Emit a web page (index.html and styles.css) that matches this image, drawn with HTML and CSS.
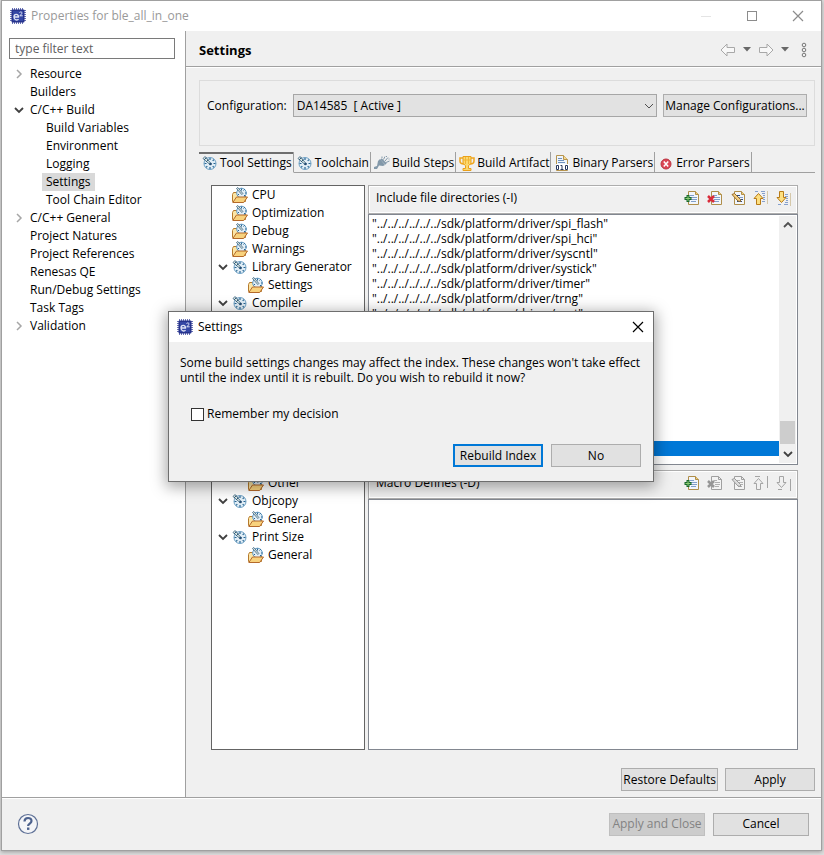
FILE: index.html
```html
<!DOCTYPE html>
<html lang="en">
<head>
<meta charset="utf-8">
<title>Properties for ble_all_in_one</title>
<link rel="stylesheet" href="styles.css">
</head>
<body>
<svg class="sprite" aria-hidden="true">
  <defs>
    <symbol id="chip" viewBox="0 0 16 16">
      <path d="M2.500 0v16M4.500 0v16M6.500 0v16M8.500 0v16M10.500 0v16M12.500 0v16M0 2.500h16M0 4.500h16M0 6.500h16M0 8.500h16M0 10.500h16M0 12.500h16" stroke="#6a72b4" stroke-width="1"/>
      <rect x="1.500" y="1.500" width="13" height="13" rx="1" fill="#26338c"/>
      <rect x="3" y="3" width="10" height="10" fill="#3446a4"/>
      <path d="M4 9h4.500C8.500 5.500 4 5.600 4 9s3.500 3.600 4.500 2" fill="none" stroke="#dfe3f5" stroke-width="1.300"/>
      <path d="M9.500 4.500c1-1 3-.5 2.500 1L9.700 7.800h3" fill="none" stroke="#dfe3f5"/>
    </symbol>
    <symbol id="gauge" viewBox="0 0 16 16">
      <circle cx="8" cy="8.500" r="6" fill="#e2eef6" stroke="#6b9fc4"/>
      <path d="M8 3v2M8 12v2M2.500 8.500h2M11.500 8.500h2M4.100 12.400l1.200-1.200M10.700 11.200l1.200 1.200M10.700 5.800l1.200-1.200" stroke="#286694" stroke-width="1.200"/>
      <path d="M1 3.500l2-2 6 7-1 1z" fill="#dfe8e2" stroke="#315d7c" stroke-width=".8"/>
      <path d="M2 5l2.500-2.500M4 7l2.500-2.500" stroke="#315d7c"/>
      <circle cx="8.500" cy="9" r="1.300" fill="#244d73"/>
    </symbol>
    <symbol id="folder" viewBox="0 0 16 16">
      <path d="M.5 14.500v-7l1-2h4l1 2h7v7z" fill="#fbe5a6" stroke="#b57a2c"/>
      <circle cx="9.500" cy="6" r="4.800" fill="#e2eef6" stroke="#5f98c2"/>
      <path d="M9.500 1.500v2M13 6h1.500M11.500 3.500l1.300-1.300M12 8l1 1M6 8l1-1" stroke="#286694"/>
      <path d="M4.500 1.500l1.300-1 5 6-1 1z" fill="#e7ece4" stroke="#315d7c" stroke-width=".8"/>
      <path d="M.8 15.500l3.700-5.500h11l-3.800 5.500z" fill="#f8d27d" stroke="#b4692a"/>
    </symbol>
    <symbol id="steps" viewBox="0 0 16 16">
      <path d="M0 14v-2l3-1 1-5 2-2 5 6-2 1-4-.5-2 3.500z" fill="#8298a9"/>
      <path d="M7 4l5 5" stroke="#8298a9" stroke-width="2"/>
      <path d="M9.500 4.500l1.500-3M11 6l3-3.500M12 7.500l3.500-1.500M8 3l0-1.500M12.500 1v1M15 3.500v1" stroke="#8298a9"/>
    </symbol>
    <symbol id="trophy" viewBox="0 0 16 16">
      <path d="M4 3H1v3c0 3 2 3 4 3M12 3h3v3c0 3-2 3-4 3" fill="none" stroke="#efa51d" stroke-width="1.500"/>
      <path d="M4 1.500h8v7l-2.500 2v3H12v2H4v-2h2.500v-3L4 8.500z" fill="#fbd86e" stroke="#eaa01a"/>
      <path d="M6.500 2v7M9.500 2v7M4 5h8" stroke="#f2b535"/>
    </symbol>
    <symbol id="binary" viewBox="0 0 16 16">
      <path d="M2.500 15.500V.5h7l4 4v11z" fill="#eef4fb" stroke="#b7954f"/>
      <path d="M9.500.5v4h4" fill="#f8d98e" stroke="#b7954f"/>
      <path d="M4 3.500h4M4 5.500h6M4 7.500h7" stroke="#6d90be"/>
      <path d="M2 9h13v6H2z" fill="#fff"/>
      <path d="M2.500 10.500h2v4h-2zM6.500 10.500h1.500V14.500M6.500 14.500h3M11.500 10.500h2v4h-2z" fill="none" stroke="#26365d"/>
    </symbol>
    <symbol id="error" viewBox="0 0 16 16">
      <circle cx="8" cy="9" r="5" fill="#db4654" stroke="#bb3442"/>
      <path d="M5.800 6.500l4.400 5M10.200 6.500l-4.400 5" stroke="#fff" stroke-width="1.500"/>
    </symbol>
    <symbol id="page" viewBox="0 0 16 16">
      <path d="M4.500 14.500V1.500h7l3 3v10z" fill="#f2f6fc" stroke="#af8e4a"/>
      <path d="M11.500 1.500v3h3" fill="#f3cf7a" stroke="#af8e4a"/>
      <path d="M6 5.500h4M7 7.500h6M7 9.500h6M7 11.500h5" stroke="#829fc9"/>
    </symbol>
    <symbol id="add" viewBox="0 0 16 16">
      <use href="#page"/><path d="M4 5v7M.5 8.500h7" stroke="#17672a" stroke-width="3"/><path d="M4 6v5M1.500 8.500h5" stroke="#8fcd75"/>
    </symbol>
    <symbol id="remove" viewBox="0 0 16 16">
      <use href="#page"/><path d="M1 6l6 6M7 6l-6 6" stroke="#d92c3b" stroke-width="2.500"/>
    </symbol>
    <symbol id="edit" viewBox="0 0 16 16">
      <use href="#page"/><path d="M7 9.500h6M7 11.500h5M6 5.500h4" stroke="#334d7b"/><path d="M2 4.500l2.500-1 6 6v2l-2.500-.5z" fill="#f3cf83" stroke="#946a29"/>
    </symbol>
    <symbol id="up" viewBox="0 0 16 16">
      <path d="M2 1.500h3M8 1.500h4M9 3.500h3M10 5.500h2M10 7.500h2M10 9.500h2M9 11.500h3" stroke="#86a0cc"/><path d="M14.500 1v13" stroke="#d5c8aa"/>
      <path d="M5.500 3.500l4.500 5H7.500v6h-4v-6H1z" fill="#fddf80" stroke="#b77a16"/>
    </symbol>
    <symbol id="down" viewBox="0 0 16 16">
      <path d="M2 14.500h3M8 14.500h4M9 12.500h3M10 10.500h2M10 8.500h2M9 6.500h3M9 4.500h3" stroke="#86a0cc"/><path d="M14.500 3v13" stroke="#d5c8aa"/>
      <path d="M5.500 12.500L1 7.500h2.500v-6h4v6H10z" fill="#fddf80" stroke="#b77a16"/>
    </symbol>
    <symbol id="page-off" viewBox="0 0 16 16">
      <path d="M4.500 14.500V1.500h7l3 3v10zM11.500 1.500v3h3" fill="#f3f3f3" stroke="#a0a0a0"/><path d="M7 5.500h3M8 7.500h5M8 9.500h5M8 11.500h4" stroke="#b0b0b0"/>
    </symbol>
    <symbol id="remove-off" viewBox="0 0 16 16"><use href="#page-off"/><path d="M1 6l6 6M7 6l-6 6" stroke="#969696" stroke-width="2.500"/></symbol>
    <symbol id="edit-off" viewBox="0 0 16 16"><use href="#page-off"/><path d="M2 4.500l2.500-1 6 6v2l-2.500-.5z" fill="#ddd" stroke="#999"/></symbol>
    <symbol id="up-off" viewBox="0 0 16 16"><path d="M5.500 3.500l4.500 5H7.500v6h-4v-6H1zM2 1.500h5M14.500 1v12" fill="none" stroke="#a4a4a4"/></symbol>
    <symbol id="down-off" viewBox="0 0 16 16"><path d="M5.500 12.500L1 7.500h2.500v-6h4v6H10zM2 14.500h4M14.500 4v12" fill="none" stroke="#a4a4a4"/></symbol>
    <symbol id="open" viewBox="0 0 10 10"><path d="M1 3l4 4 4-4" fill="none" stroke="#404040" stroke-width="1.800"/></symbol>
    <symbol id="closed" viewBox="0 0 10 10"><path d="M3 1l4 4-4 4" fill="none" stroke="#a6a6a6" stroke-width="1.500"/></symbol>
    <symbol id="close" viewBox="0 0 12 12"><path d="M1 1l10 10M11 1L1 11" stroke="currentColor" stroke-width="1.200"/></symbol>
    <symbol id="left" viewBox="0 0 16 14"><path d="M1 7l6-6v3.500h7.500v5H7V13z" fill="#f8f8f8" stroke="#a8a8a8"/></symbol>
    <symbol id="right" viewBox="0 0 16 14"><path d="M15 7L9 1v3.500H1.500v5H9V13z" fill="#f8f8f8" stroke="#a8a8a8"/></symbol>
    <symbol id="caret" viewBox="0 0 8 5"><path d="M0 0h8L4 4.500z" fill="#686868"/></symbol>
  </defs>
</svg>

<main class="window">
  <header class="titlebar">
    <svg class="i16"><use href="#chip"/></svg>
    <span class="title">Properties for ble_all_in_one</span>
    <div class="caption">
      <button aria-label="Minimize"><svg class="i12"><path d="M1 6.500h10" stroke="#e4e4e4"/></svg></button>
      <button aria-label="Maximize"><svg class="i12"><rect x="1.500" y="1.500" width="9" height="9" fill="none" stroke="#8c8c8c"/></svg></button>
      <button aria-label="Close"><svg class="i12"><use href="#close"/></svg></button>
    </div>
  </header>

  <div class="body">
    <nav class="side">
      <input class="filter" type="text" aria-label="Filter" placeholder="type filter text">
      <ul class="nav">
        <li><svg class="i10"><use href="#closed"/></svg><a href="#">Resource</a></li>
        <li><i class="i10"></i><a href="#">Builders</a></li>
        <li><svg class="i10"><use href="#open"/></svg><a href="#">C/C++ Build</a></li>
        <li class="sub"><a href="#">Build Variables</a></li>
        <li class="sub"><a href="#">Environment</a></li>
        <li class="sub"><a href="#">Logging</a></li>
        <li class="sub"><a href="#" class="current">Settings</a></li>
        <li class="sub"><a href="#">Tool Chain Editor</a></li>
        <li><svg class="i10"><use href="#closed"/></svg><a href="#">C/C++ General</a></li>
        <li><i class="i10"></i><a href="#">Project Natures</a></li>
        <li><i class="i10"></i><a href="#">Project References</a></li>
        <li><i class="i10"></i><a href="#">Renesas QE</a></li>
        <li><i class="i10"></i><a href="#">Run/Debug Settings</a></li>
        <li><i class="i10"></i><a href="#">Task Tags</a></li>
        <li><svg class="i10"><use href="#closed"/></svg><a href="#">Validation</a></li>
      </ul>
    </nav>

    <section class="page">
      <header class="heading">
        <h1>Settings</h1>
        <div class="history">
          <button aria-label="Back"><svg class="arrow"><use href="#left"/></svg></button>
          <button aria-label="Back history"><svg class="caret"><use href="#caret"/></svg></button>
          <button aria-label="Forward"><svg class="arrow"><use href="#right"/></svg></button>
          <button aria-label="Forward history"><svg class="caret"><use href="#caret"/></svg></button>
          <button class="menu" aria-label="Menu"><svg class="dots"><g fill="none" stroke="#777"><circle cx="4" cy="3" r="1.800"/><circle cx="4" cy="8" r="1.800"/><circle cx="4" cy="13" r="1.800"/></g></svg></button>
        </div>
      </header>

      <div class="content">
        <div class="config">
          <label for="cfg">Configuration:</label>
          <div class="combo">
            <select id="cfg"><option>DA14585&nbsp; [ Active ]</option></select>
            <svg class="i10"><path d="M1 3l4 4 4-4" fill="none" stroke="#505050"/></svg>
          </div>
          <button class="btn manage">Manage Configurations...</button>
        </div>

        <div class="tabs" role="tablist">
          <button role="tab" class="tab active" aria-selected="true"><svg class="i16"><use href="#gauge"/></svg>Tool Settings</button>
          <button role="tab" class="tab"><svg class="i16"><use href="#gauge"/></svg>Toolchain</button>
          <button role="tab" class="tab"><svg class="i16"><use href="#steps"/></svg>Build Steps</button>
          <button role="tab" class="tab"><svg class="i16"><use href="#trophy"/></svg>Build Artifact</button>
          <button role="tab" class="tab"><svg class="i16"><use href="#binary"/></svg>Binary Parsers</button>
          <button role="tab" class="tab"><svg class="i16"><use href="#error"/></svg>Error Parsers</button>
          <div class="rest"></div>
        </div>

        <div class="panels">
          <ul class="tools">
            <li><i class="i10"></i><svg class="i16"><use href="#folder"/></svg>CPU</li>
            <li><i class="i10"></i><svg class="i16"><use href="#folder"/></svg>Optimization</li>
            <li><i class="i10"></i><svg class="i16"><use href="#folder"/></svg>Debug</li>
            <li><i class="i10"></i><svg class="i16"><use href="#folder"/></svg>Warnings</li>
            <li><svg class="i10"><use href="#open"/></svg><svg class="i16"><use href="#gauge"/></svg>Library Generator</li>
            <li class="leaf"><svg class="i16"><use href="#folder"/></svg>Settings</li>
            <li><svg class="i10"><use href="#open"/></svg><svg class="i16"><use href="#gauge"/></svg>Compiler</li>
            <li class="leaf after-gap"><svg class="i16"><use href="#folder"/></svg>Other</li>
            <li><svg class="i10"><use href="#open"/></svg><svg class="i16"><use href="#gauge"/></svg>Objcopy</li>
            <li class="leaf"><svg class="i16"><use href="#folder"/></svg>General</li>
            <li><svg class="i10"><use href="#open"/></svg><svg class="i16"><use href="#gauge"/></svg>Print Size</li>
            <li class="leaf"><svg class="i16"><use href="#folder"/></svg>General</li>
          </ul>

          <div class="options">
            <section class="option">
              <header class="bar">
                <h2>Include file directories (-I)</h2>
                <button aria-label="Add"><svg class="i16"><use href="#add"/></svg></button>
                <button aria-label="Delete"><svg class="i16"><use href="#remove"/></svg></button>
                <button aria-label="Edit"><svg class="i16"><use href="#edit"/></svg></button>
                <button aria-label="Move up"><svg class="i16"><use href="#up"/></svg></button>
                <button aria-label="Move down"><svg class="i16"><use href="#down"/></svg></button>
              </header>
              <div class="list">
                <ul class="paths">
                  <li>"../../../../../../sdk/platform/driver/spi_flash"</li>
                  <li>"../../../../../../sdk/platform/driver/spi_hci"</li>
                  <li>"../../../../../../sdk/platform/driver/syscntl"</li>
                  <li>"../../../../../../sdk/platform/driver/systick"</li>
                  <li>"../../../../../../sdk/platform/driver/timer"</li>
                  <li>"../../../../../../sdk/platform/driver/trng"</li>
                  <li>"../../../../../../sdk/platform/driver/uart"</li>
                  <li class="selected"></li>
                </ul>
                <div class="scroll">
                  <svg class="i10"><path d="M1 7l4-4 4 4" fill="none" stroke="#505050" stroke-width="1.800"/></svg>
                  <div class="thumb"></div>
                  <svg class="i10"><use href="#open"/></svg>
                </div>
              </div>
            </section>
            <section class="option">
              <header class="bar">
                <h2>Macro Defines (-D)</h2>
                <button aria-label="Add"><svg class="i16"><use href="#add"/></svg></button>
                <button aria-label="Delete" disabled><svg class="i16"><use href="#remove-off"/></svg></button>
                <button aria-label="Edit" disabled><svg class="i16"><use href="#edit-off"/></svg></button>
                <button aria-label="Move up" disabled><svg class="i16"><use href="#up-off"/></svg></button>
                <button aria-label="Move down" disabled><svg class="i16"><use href="#down-off"/></svg></button>
              </header>
              <div class="list"></div>
            </section>
          </div>
        </div>

        <div class="actions">
          <button class="btn restore">Restore Defaults</button>
          <button class="btn">Apply</button>
        </div>
      </div>
    </section>
  </div>

  <footer class="footer">
    <button class="help" aria-label="Help"><svg class="i22"><circle cx="11" cy="11" r="9.500" fill="#f4f5f8" stroke="#5e7096" stroke-width="1.200"/><path d="M7.500 8.500C7.500 3.800 14.500 4 14.500 8c0 2.500-3.400 2.600-3.400 5" fill="none" stroke="#4d628e" stroke-width="2.200"/><rect x="10" y="14.500" width="2.400" height="2.400" fill="#4d628e"/></svg></button>
    <button class="btn wide" disabled>Apply and Close</button>
    <button class="btn wide">Cancel</button>
  </footer>
</main>

<div class="dialog" role="dialog" aria-labelledby="dlg-title">
  <header class="dialog-title">
    <svg class="i16"><use href="#chip"/></svg>
    <span id="dlg-title">Settings</span>
    <button aria-label="Close"><svg class="i12"><use href="#close"/></svg></button>
  </header>
  <p>Some build settings changes may affect the index. These changes won't take effect<br>until the index until it is rebuilt. Do you wish to rebuild it now?</p>
  <label class="check"><input type="checkbox">Remember my decision</label>
  <div class="dialog-actions">
    <button class="btn primary">Rebuild Index</button>
    <button class="btn">No</button>
  </div>
</div>
</body>
</html>
```
FILE: styles.css
```css
* { box-sizing: border-box; }

body {
  margin: 0;
  padding: 0 2px 4px 1px;
  min-height: 100vh;
  display: flex;
  position: relative;
  background: #dedede;
  color: #000;
  font: 12px/18px "Open Sans", "Noto Sans", sans-serif;
}

ul, h1, h2, p { margin: 0; padding: 0; list-style: none; font-size: 12px; }
h2 { font-weight: 400; }
a { color: inherit; text-decoration: none; }
button, input, select { font: inherit; color: inherit; }
button { border: 0; padding: 0; background: none; white-space: nowrap; }
svg { display: block; flex: none; }

.sprite { position: absolute; width: 0; height: 0; }
.i10 { width: 10px; height: 10px; flex: none; }
.i12 { width: 12px; height: 12px; }
.i16 { width: 16px; height: 16px; }
.i22 { width: 22px; height: 22px; }

.window {
  flex: 1;
  min-width: 0;
  display: flex;
  flex-direction: column;
  border: 1px solid #a0a0a0;
  background: #f0f0f0;
  box-shadow: 0 1px 4px rgba(0, 0, 0, .3);
}

.titlebar {
  display: flex;
  align-items: center;
  gap: 5px;
  height: 30px;
  padding-left: 8px;
  background: #fff;
  color: #999;
}
.title { flex: 1; }
.caption { display: flex; }
.caption button { width: 46px; display: grid; place-items: center; color: #8c8c8c; }

.body { flex: 1; display: flex; min-height: 0; }

.side { width: 184px; flex: none; padding: 7px; background: #fff; border-right: 1px solid #a0a0a0; }
.filter { display: block; width: 166px; height: 21px; padding: 0 5px; border: 1px solid #7a7a7a; background: #fff; }
.filter::placeholder { color: #606060; opacity: 1; }
.nav { margin-top: 6px; }
.nav li { display: flex; align-items: center; height: 18px; padding-left: 5px; gap: 4px; }
.nav li.sub { padding-left: 35px; }
.nav a { padding: 0 4px; margin-left: -2px; white-space: nowrap; }
.nav .current { background: #d9d9d9; }

.page { flex: 1; min-width: 0; display: flex; flex-direction: column; }
.heading {
  display: flex;
  align-items: center;
  height: 36px;
  padding: 2px 13px 0;
  border-bottom: 1px solid #a0a0a0;
  box-shadow: 0 1px #fff;
}
h1 { flex: 1; font-size: 13px; font-weight: 700; }
.history { display: flex; align-items: center; gap: 7px; }
.menu { margin-left: 4px; }
.arrow { width: 16px; height: 14px; }
.caret { width: 8px; height: 5px; }
.dots { width: 8px; height: 16px; }

.content { flex: 1; display: flex; flex-direction: column; padding: 13px 6px 6px 13px; }

.config { display: flex; align-items: center; gap: 6px; height: 66px; padding: 0 7px 15px 7px; border: 1px solid #dcdcdc; }
.combo { flex: 1; position: relative; }
.combo select { appearance: none; display: block; width: 100%; height: 23px; padding: 0 3px; border: 1px solid #a6a6a6; border-radius: 0; background: #e2e2e2; }
.combo svg { position: absolute; right: 3px; top: 7px; pointer-events: none; }

.btn { min-width: 90px; height: 23px; padding: 0 1px; border: 1px solid #adadad; background: #e1e1e1; }
.btn:disabled { border-color: #bfbfbf; background: #ccc; color: #838383; }
.manage { min-width: 144px; }
.restore { min-width: 95px; }
.wide { min-width: 96px; }

.tabs { display: flex; height: 21px; margin-top: 6px; }
.tab { display: flex; align-items: center; gap: 2px; padding: 2px 1px 0 3px; border-right: 1px solid #a0a0a0; border-bottom: 1px solid #a0a0a0; }
.tab.active { border-bottom-color: transparent; box-shadow: inset 0 2px #6e6e6e; }
.rest { flex: 1; border-bottom: 1px solid #a0a0a0; }

.panels { flex: 1; display: flex; gap: 3px; margin: 12px 17px 18px 12px; }
.tools { width: 154px; flex: none; border: 1px solid #646464; background: #fff; }
.tools li { display: flex; align-items: center; gap: 4px; height: 18px; padding-left: 6px; white-space: nowrap; }
.tools li.leaf { padding-left: 36px; }
.tools li.after-gap { margin-top: 162px; }

.options { flex: 1; min-width: 0; display: flex; flex-direction: column; gap: 5px; }
.option { flex: 1; display: flex; flex-direction: column; }
.bar { display: flex; align-items: center; gap: 7px; height: 29px; padding: 0 5px 3px 7px; border: 1px solid #adadad; box-shadow: inset 0 0 0 1px #fff; }
.bar h2 { flex: 1; }
.list { flex: 1; display: flex; padding: 1px; border: 1px solid #828790; background: #fff; }
.paths { flex: 1; display: flex; flex-direction: column; padding-bottom: 7px; line-height: 15px; }
.paths li { height: 15px; padding-left: 2px; white-space: nowrap; }
.paths .selected { margin-top: auto; background: #0078d7; }
.scroll { display: flex; flex-direction: column; align-items: center; width: 17px; padding: 4px 0; background: #f0f0f0; }
.thumb { width: 15px; height: 23px; margin: auto 0 5px; background: #cdcdcd; }

.actions { display: flex; justify-content: flex-end; gap: 7px; }

.footer { display: flex; align-items: center; gap: 8px; height: 53px; padding: 0 12px 0 15px; border-top: 1px solid #a0a0a0; box-shadow: inset 0 1px #fff; }
.help { margin-right: auto; }

.dialog {
  position: absolute;
  left: 168px;
  top: 311px;
  width: 486px;
  border: 1px solid #6e6e6e;
  background: #f0f0f0;
  box-shadow: 0 3px 14px 2px rgba(0, 0, 0, .35);
}
.dialog-title { display: flex; align-items: center; gap: 5px; height: 30px; padding: 0 9px 0 8px; background: #fff; }
.dialog-title button { margin-left: auto; }
.dialog p { padding: 13px 11px 0; line-height: 15px; white-space: nowrap; }
.check { display: flex; align-items: center; gap: 3px; width: max-content; margin: 20px 0 0 22px; }
.check input { appearance: none; width: 13px; height: 13px; margin: 0; border: 1px solid #333; background: #fff; }
.dialog-actions { display: flex; justify-content: flex-end; gap: 8px; padding: 21px 12px 14px; }
.primary { border: 2px solid #0078d7; }
```
